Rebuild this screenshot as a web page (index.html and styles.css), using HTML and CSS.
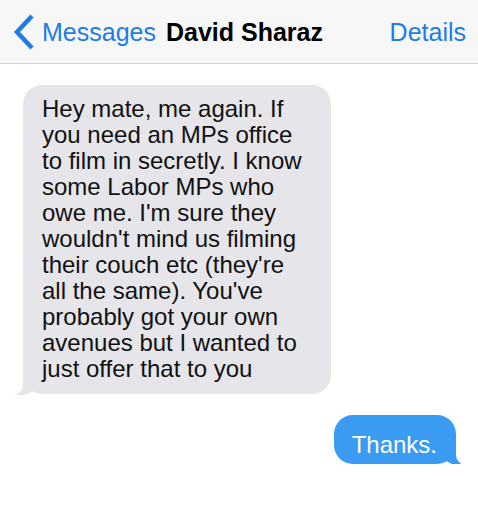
FILE: index.html
```html
<!DOCTYPE html>
<html lang="en">
<head>
    <meta charset="UTF-8">
    <meta name="viewport" content="width=device-width, initial-scale=1.0">
    <title>David Sharaz</title>
    <link rel="stylesheet" href="styles.css">
</head>
<body>
    <div class="topbar">
        <a class="back" href="#">
            <svg class="chevron" width="22" height="36" viewBox="0 0 22 36">
                <polyline points="19,2 4,18 19,34" fill="none" stroke="#1d7ce6" stroke-width="4.5"/>
            </svg>
            <span>Messages</span>
        </a>
        <div class="title">David Sharaz</div>
        <a class="details" href="#">Details</a>
    </div>

    <div class="thread">
        <div class="bubble received">Hey mate, me again. If you need an MPs office to film in secretly. I know some Labor MPs who owe me. I'm sure they wouldn't mind us filming their couch etc (they're all the same). You've probably got your own avenues but I wanted to just offer that to you</div>
        <div class="bubble sent">Thanks.</div>
    </div>
</body>
</html>
```

FILE: styles.css
```css
body {
    margin: 0;
    background: #fff;
    font-family: "Liberation Sans", Arial, sans-serif;
}
.topbar {
    display: flex;
    align-items: center;
    height: 62px;
    padding: 1px 12px 0 13px;
    background: #f7f7f8;
    border-bottom: 1px solid #cfcfd3;
    font-size: 25px;
}
.topbar a {
    color: #1d7ce6;
    text-decoration: none;
}
.back {
    display: flex;
    align-items: center;
}
.chevron {
    margin-right: 7px;
}
.title {
    margin-left: 10px;
    font-weight: bold;
    color: #000;
}
.details {
    margin-left: auto;
}
.thread {
    display: flex;
    flex-direction: column;
    padding: 21px 22px 0 23px;
    gap: 21px;
}
.bubble {
    position: relative;
    font-size: 24px;
    line-height: 26px;
    border-radius: 19px;
}
.received {
    align-self: flex-start;
    width: 270px;
    padding: 11px 19px 12px 19px;
    background: #e5e5ea;
    color: #111;
}
.sent {
    align-self: flex-end;
    padding: 17px 19px 6px 18px;
    background: #3a9bf3;
    color: #fff;
}
/* tails */
.bubble::before,
.bubble::after {
    content: "";
    position: absolute;
    bottom: -1px;
    height: 22px;
}
.received::before {
    left: -8px;
    width: 22px;
    background: #e5e5ea;
    border-bottom-right-radius: 16px 14px;
}
.received::after {
    left: -26px;
    width: 26px;
    background: #fff;
    border-bottom-right-radius: 10px;
}
.sent::before {
    right: -8px;
    width: 22px;
    background: #3a9bf3;
    border-bottom-left-radius: 16px 14px;
}
.sent::after {
    right: -26px;
    width: 26px;
    background: #fff;
    border-bottom-left-radius: 10px;
}
```
